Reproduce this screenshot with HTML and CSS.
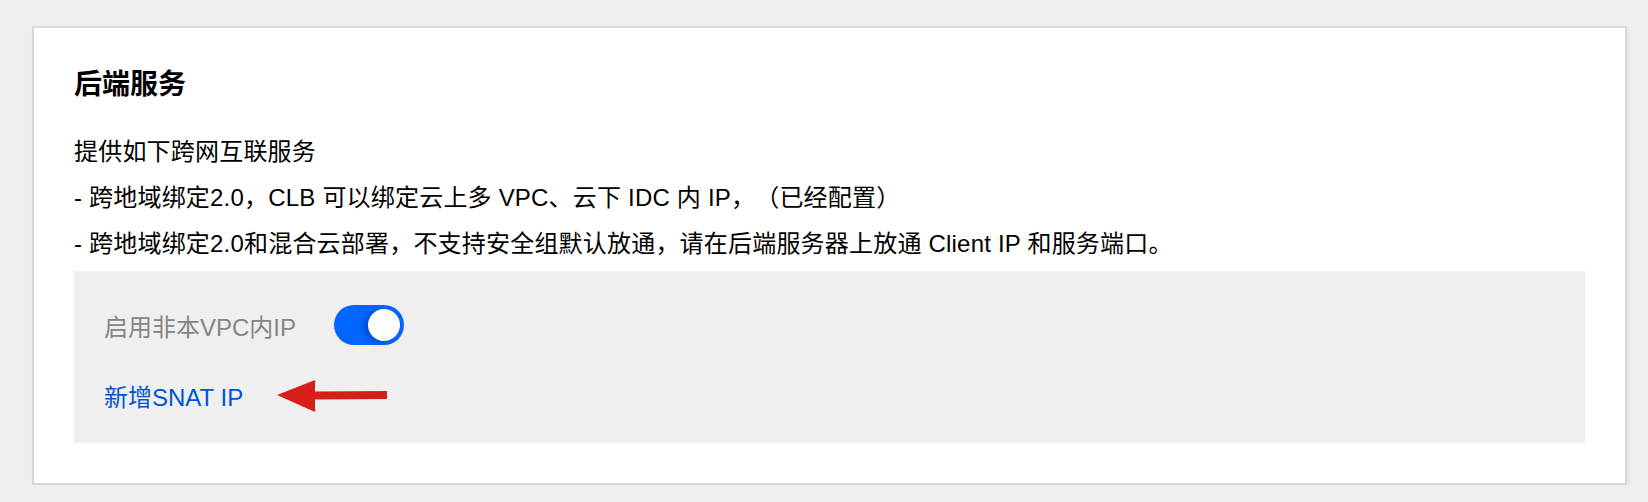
FILE: index.html
```html
<!DOCTYPE html>
<html>
<head lang="zh-CN">
  <meta charset="UTF-8">
  <title>后端服务</title>
  <link rel="stylesheet" href="styles.css">
</head>
<body>
  <div class="card">
    <h2 class="title">后端服务</h2>
    <div class="desc">
      <p>提供如下跨网互联服务</p>
      <p>- 跨地域绑定2.0，CLB 可以绑定云上多 VPC、云下 IDC 内 IP，（已经配置）</p>
      <p>- 跨地域绑定2.0和混合云部署，不支持安全组默认放通，请在后端服务器上放通 Client IP 和服务端口。</p>
    </div>
    <div class="panel">
      <div class="row">
        <span class="label">启用非本VPC内IP</span>
        <span class="switch on"><i class="knob"></i></span>
      </div>
      <div class="row link-row">
        <a class="link" href="#">新增SNAT IP</a>
        <!-- 标注箭头 -->
        <svg class="arrow" width="110" height="32" viewBox="0 0 110 32">
          <path d="M0 15 L38 0 L38 11.5 L110 11 L110 19 L38 19.5 L38 32 Z" fill="#d71f1a"/>
        </svg>
      </div>
    </div>
  </div>
</body>
</html>
```

FILE: styles.css
```css
* {
  margin: 0;
  padding: 0;
}
body {
  background: #efefef;
  padding: 26px 21px 0 32px;
  font-family: "Liberation Sans", "Noto Sans CJK SC", sans-serif;
  color: #000;
  text-spacing-trim: space-all;
}
.card {
  background: #fff;
  border: 2px solid #d9d9d9;
  box-shadow: 2px 3px 6px rgba(0, 0, 0, 0.06);
  padding: 37px 40px 40px 40px;
}
.title {
  font-size: 28px;
  line-height: 40px;
  font-weight: bold;
}
.desc {
  margin-top: 24px;
  font-size: 24px;
  line-height: 46px;
  letter-spacing: 0.2px;
}
.panel {
  margin-top: 4px;
  background: #efefef;
  padding: 34px 30px 28px 30px;
}
.row {
  display: flex;
  align-items: center;
  height: 40px;
  font-size: 24px;
}
.label {
  width: 230px;
  color: #858585;
}
.switch {
  width: 70px;
  height: 40px;
  border-radius: 20px;
  background: #0066ff;
  display: flex;
  align-items: center;
  justify-content: flex-end;
  padding-right: 4px;
  box-sizing: border-box;
}
.knob {
  width: 32px;
  height: 32px;
  border-radius: 50%;
  background: #fff;
  box-shadow: -4px 1px 6px rgba(0, 30, 110, 0.35);
}
.link-row {
  margin-top: 30px;
  position: relative;
}
.link {
  color: #0052d9;
  text-decoration: none;
}
.arrow {
  position: absolute;
  left: 173px;
  top: 5px;
}
```
